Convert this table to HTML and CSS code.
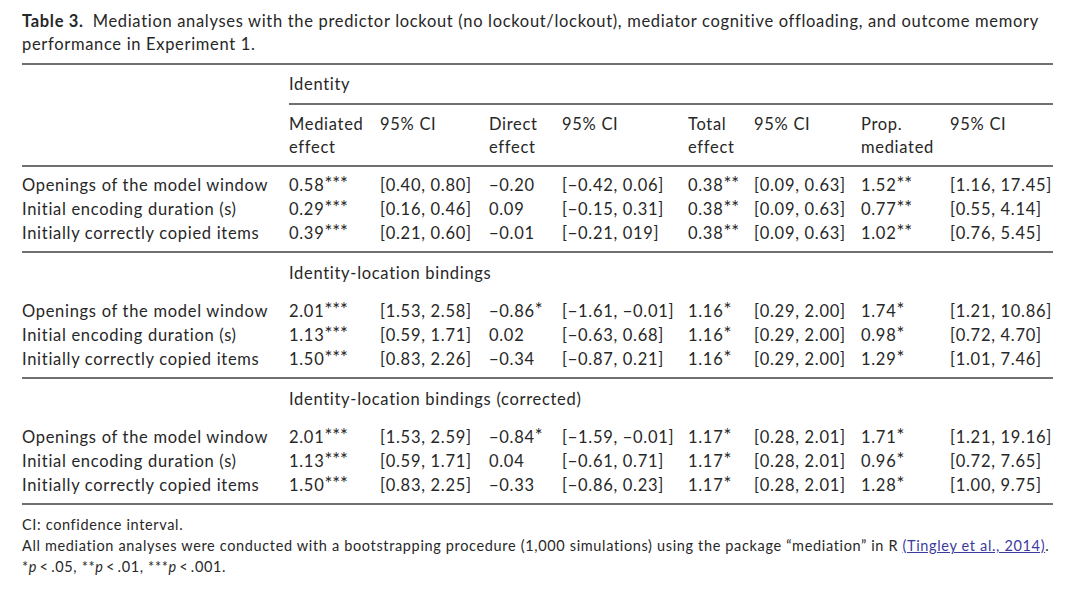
FILE: index.html
```html
<!DOCTYPE html>
<html lang="en">
<head>
<meta charset="utf-8">
<title>Table 3</title>
<link rel="stylesheet" href="styles.css">
</head>
<body>
<div class="page">
  <p class="caption"><b class="label">Table 3.</b><span>Mediation analyses with the predictor lockout (no lockout/lockout), mediator cognitive offloading, and outcome memory</span> <span>performance in Experiment 1.</span></p>
  <table class="tbl">
    <colgroup>
      <col class="c0"><col class="c1"><col class="c2"><col class="c3"><col class="c4"><col class="c5"><col class="c6"><col class="c7"><col class="c8">
    </colgroup>
    <thead>
      <tr class="group top">
        <th></th>
        <th colspan="8" class="gh">Identity</th>
      </tr>
      <tr class="heads">
        <th></th>
        <th>Mediated<br>effect</th>
        <th>95% CI</th>
        <th>Direct<br>effect</th>
        <th>95% CI</th>
        <th>Total<br>effect</th>
        <th>95% CI</th>
        <th>Prop.<br>mediated</th>
        <th>95% CI</th>
      </tr>
    </thead>
    <tbody>
      <tr class="first">
        <td>Openings of the model window</td><td>0.58<span class="s">***</span></td><td>[0.40, 0.80]</td><td>−0.20</td><td>[−0.42, 0.06]</td><td>0.38<span class="s">**</span></td><td>[0.09, 0.63]</td><td>1.52<span class="s">**</span></td><td>[1.16, 17.45]</td>
      </tr>
      <tr>
        <td>Initial encoding duration (s)</td><td>0.29<span class="s">***</span></td><td>[0.16, 0.46]</td><td>0.09</td><td>[−0.15, 0.31]</td><td>0.38<span class="s">**</span></td><td>[0.09, 0.63]</td><td>0.77<span class="s">**</span></td><td>[0.55, 4.14]</td>
      </tr>
      <tr class="last">
        <td>Initially correctly copied items</td><td>0.39<span class="s">***</span></td><td>[0.21, 0.60]</td><td>−0.01</td><td>[−0.21, 019]</td><td>0.38<span class="s">**</span></td><td>[0.09, 0.63]</td><td>1.02<span class="s">**</span></td><td>[0.76, 5.45]</td>
      </tr>
      <tr class="group">
        <td></td><td colspan="8">Identity-location bindings</td>
      </tr>
      <tr class="first">
        <td>Openings of the model window</td><td>2.01<span class="s">***</span></td><td>[1.53, 2.58]</td><td>−0.86<span class="s">*</span></td><td>[−1.61, −0.01]</td><td>1.16<span class="s">*</span></td><td>[0.29, 2.00]</td><td>1.74<span class="s">*</span></td><td>[1.21, 10.86]</td>
      </tr>
      <tr>
        <td>Initial encoding duration (s)</td><td>1.13<span class="s">***</span></td><td>[0.59, 1.71]</td><td>0.02</td><td>[−0.63, 0.68]</td><td>1.16<span class="s">*</span></td><td>[0.29, 2.00]</td><td>0.98<span class="s">*</span></td><td>[0.72, 4.70]</td>
      </tr>
      <tr class="last">
        <td>Initially correctly copied items</td><td>1.50<span class="s">***</span></td><td>[0.83, 2.26]</td><td>−0.34</td><td>[−0.87, 0.21]</td><td>1.16<span class="s">*</span></td><td>[0.29, 2.00]</td><td>1.29<span class="s">*</span></td><td>[1.01, 7.46]</td>
      </tr>
      <tr class="group">
        <td></td><td colspan="8">Identity-location bindings (corrected)</td>
      </tr>
      <tr class="first">
        <td>Openings of the model window</td><td>2.01<span class="s">***</span></td><td>[1.53, 2.59]</td><td>−0.84<span class="s">*</span></td><td>[−1.59, −0.01]</td><td>1.17<span class="s">*</span></td><td>[0.28, 2.01]</td><td>1.71<span class="s">*</span></td><td>[1.21, 19.16]</td>
      </tr>
      <tr>
        <td>Initial encoding duration (s)</td><td>1.13<span class="s">***</span></td><td>[0.59, 1.71]</td><td>0.04</td><td>[−0.61, 0.71]</td><td>1.17<span class="s">*</span></td><td>[0.28, 2.01]</td><td>0.96<span class="s">*</span></td><td>[0.72, 7.65]</td>
      </tr>
      <tr class="last end">
        <td>Initially correctly copied items</td><td>1.50<span class="s">***</span></td><td>[0.83, 2.25]</td><td>−0.33</td><td>[−0.86, 0.23]</td><td>1.17<span class="s">*</span></td><td>[0.28, 2.01]</td><td>1.28<span class="s">*</span></td><td>[1.00, 9.75]</td>
      </tr>
    </tbody>
  </table>
  <div class="notes">
    <p>CI: confidence interval.</p>
    <p>All mediation analyses were conducted with a bootstrapping procedure (1,000 simulations) using the package “mediation” in R <a class="ref" href="#">(Tingley et al., 2014)</a>.</p>
    <p>*<i>p</i>&thinsp;&lt;&thinsp;.05, **<i>p</i>&thinsp;&lt;&thinsp;.01, ***<i>p</i>&thinsp;&lt;&thinsp;.001.</p>
  </div>
</div>
</body>
</html>
```

FILE: styles.css
```css
html, body {
  margin: 0;
  padding: 0;
  background: #ffffff;
}

.page {
  width: 1031px;
  padding: 10px 0 0 22px;
  font-family: "Lato", "Open Sans", "DejaVu Sans", sans-serif;
  color: #272727;
}

.caption {
  margin: 0;
  font-size: 16.5px;
  line-height: 23px;
  letter-spacing: 0.68px;
}

.caption .label {
  font-weight: 700;
  margin-right: 9px;
}

.tbl {
  margin-top: 7px;
  width: 1031px;
  border-collapse: collapse;
  table-layout: fixed;
  font-size: 16.5px;
  line-height: 24px;
  letter-spacing: 0.7px;
}

.c0 { width: 267px; }
.c1 { width: 91px; }
.c2 { width: 109px; }
.c3 { width: 73px; }
.c4 { width: 126px; }
.c5 { width: 66px; }
.c6 { width: 107px; }
.c7 { width: 89px; }
.c8 { width: 103px; }

.tbl th,
.tbl td {
  padding: 0;
  text-align: left;
  vertical-align: middle;
  font-weight: 400;
  white-space: nowrap;
}

.tbl tr.top {
  border-top: 2px solid #707070;
}

.tbl thead tr.group th {
  height: 38px;
}

.tbl tbody tr.group td {
  height: 40px;
}

.tbl th.gh {
  border-bottom: 2px solid #707070;
}

.tbl tr.heads th {
  padding: 8px 0 6px;
  line-height: 23px;
  vertical-align: top;
}

.tbl tr.heads {
  border-bottom: 2px solid #707070;
}

.tbl tr.first td {
  padding-top: 6px;
}

.tbl tr.last td {
  padding-bottom: 6px;
}

.tbl tr.last {
  border-bottom: 2px solid #707070;
}

.s {
  letter-spacing: 0;
  font-size: 1.12em;
  line-height: 0;
  position: relative;
  top: -1px;
}

.notes {
  margin-top: 9px;
  font-size: 14.5px;
  line-height: 21px;
  letter-spacing: 0.65px;
}

.notes p {
  margin: 0;
}

.ref {
  color: #3b3b9e;
  text-decoration: underline;
}
```
